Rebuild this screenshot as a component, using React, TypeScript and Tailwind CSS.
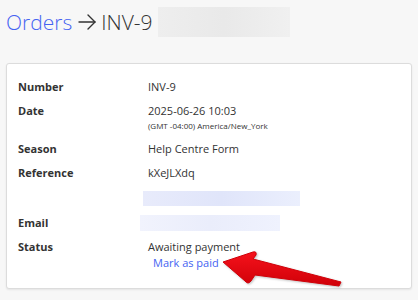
import React from 'react';

const font = { fontFamily: '"Open Sans", "Liberation Sans", sans-serif' };

function Row({ label, children }: { label: string; children?: React.ReactNode }) {
  return (
    <div className="flex">
      <div className="w-[130px] shrink-0 text-[11px] font-bold leading-4 text-[#333]">{label}</div>
      <div className="flex-1 text-[11px] leading-4 text-[#333]">{children}</div>
    </div>
  );
}

export default function App() {
  return (
    <div className="relative w-[418px] h-[300px] overflow-hidden bg-[#f7f7f7]" style={font}>
      {/* Header */}
      <div className="flex items-center h-[42px] pl-[6px] pt-[2px]">
        <span className="text-[21px] font-light text-[#4563f2] leading-none">Orders</span>
        <svg className="ml-[6px] text-[#333]" width="18" height="16" viewBox="0 0 18 16" fill="none" stroke="currentColor" strokeWidth="1.4" strokeLinecap="round" strokeLinejoin="round">
          <path d="M1 8 H17" />
          <path d="M10 1 L17 8 L10 15" />
        </svg>
        <span className="text-[21px] font-light text-[#333] leading-none ml-[5px]">INV-9</span>
        <div className="ml-[5px] w-[132px] h-[30px] bg-gradient-to-r from-[#eeeeee] via-[#e9e9e9] to-[#f0f0f0]" />
      </div>

      {/* Card */}
      <div className="mx-[6px] mt-[21px] h-[226px] bg-white border border-[#dcdcdc] rounded-[3px] shadow-[0_1px_2px_rgba(0,0,0,0.08)] pl-[11px] pt-[15px] flex flex-col gap-2">
        <Row label="Number">INV-9</Row>
        <div className="flex">
          <div className="w-[130px] shrink-0 text-[11px] font-bold leading-4 text-[#333]">Date</div>
          <div className="flex-1">
            <div className="text-[11px] leading-4 text-[#333]">2025-06-26 10:03</div>
            <div className="text-[8px] leading-[14px] text-[#333]">(GMT -04:00) America/New_York</div>
          </div>
        </div>
        <Row label="Season">Help Centre Form</Row>
        <Row label="Reference">kXeJLXdq</Row>
        <div className="flex h-[18px]">
          <div className="w-[125px] shrink-0" />
          <div className="mt-[2px] w-[157px] h-[15px] bg-gradient-to-r from-[#e8ebfb] via-[#e0e5fa] to-[#ebeffd]" />
        </div>
        <div className="flex">
          <div className="w-[122px] shrink-0 text-[11px] font-bold leading-4 text-[#333]">Email</div>
          <div className="w-[140px] h-[16px] bg-gradient-to-r from-[#f1f3fd] via-[#eaedfb] to-[#eff2fe]" />
        </div>
        <div className="flex">
          <div className="w-[130px] shrink-0 text-[11px] font-bold leading-4 text-[#333]">Status</div>
          <div className="flex-1">
            <div className="text-[11px] leading-4 text-[#333]">Awaiting payment</div>
            <div className="text-[11px] leading-4 text-[#4563f2] pl-[5px]">Mark as paid</div>
          </div>
        </div>
      </div>

      {/* Red arrow annotation */}
      <svg className="absolute left-0 top-0 pointer-events-none" width="418" height="300" viewBox="0 0 418 300">
        <defs>
          <linearGradient id="ar" x1="0" y1="0" x2="0" y2="1">
            <stop offset="0" stopColor="#f5121c" />
            <stop offset="1" stopColor="#d00008" />
          </linearGradient>
        </defs>
        <path
          d="M223 262 L253 252 Q257 251 256 255 L253 259 L341 282 L339 286 L255 275 L251 281 Q248 285 245 281 Z"
          fill="url(#ar)"
          stroke="#d00008"
          strokeWidth="1"
          strokeLinejoin="round"
          style={{ filter: 'drop-shadow(1px 1px 1px rgba(0,0,0,0.25))' }}
        />
      </svg>
    </div>
  );
}
